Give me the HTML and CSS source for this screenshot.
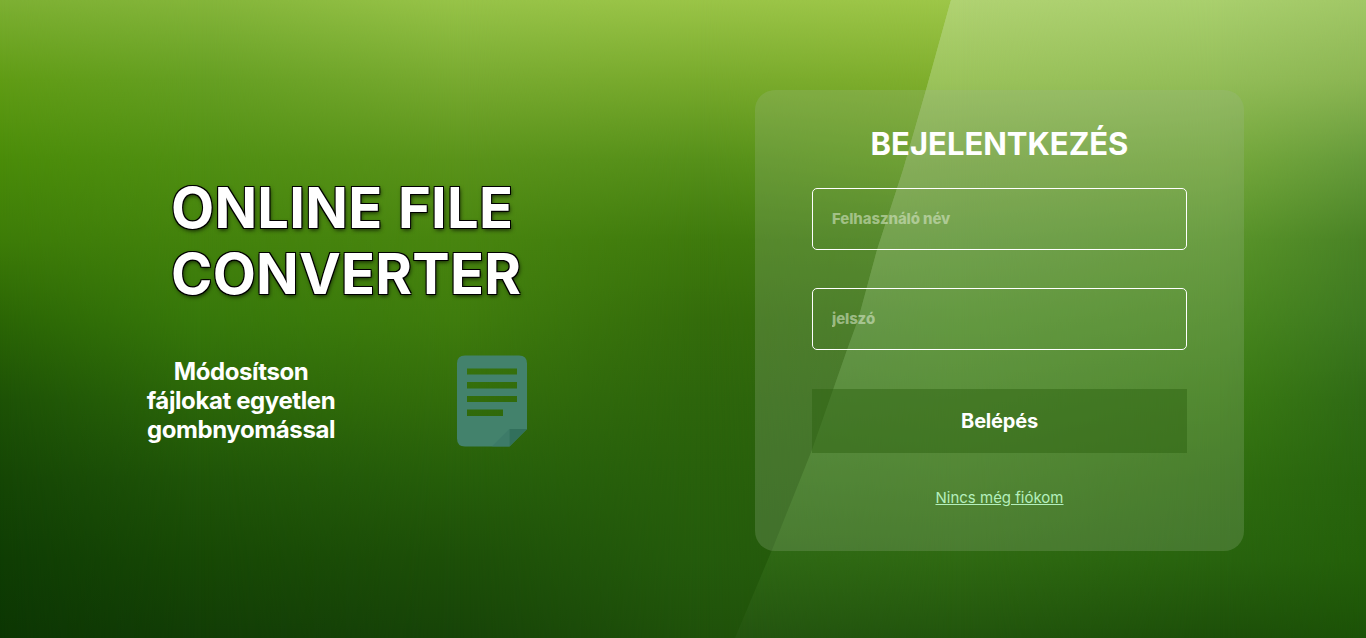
FILE: index.html
```html
<!DOCTYPE html>
<html lang="hu">
<head>
<meta charset="utf-8">
<title>Online File Converter</title>
<link rel="stylesheet" href="styles.css">
</head>
<body>
<div class="backdrop" aria-hidden="true">
  <div class="tone l1"></div><div class="tone l2"></div><div class="tone l3"></div><div class="tone l4"></div><div class="tone l5"></div>
  <div class="beam"><div class="tone r1"></div><div class="tone r2"></div><div class="tone r3"></div><div class="tone r4"></div></div>
</div>
<main class="page">
  <section class="intro">
    <h1 class="title">ONLINE FILE<br>CONVERTER</h1>
    <div class="pitch">
      <p class="slogan">Módosítson<br>fájlokat egyetlen<br>gombnyomással</p>
      <svg class="doc" viewBox="0 0 70 92" width="70" height="92">
        <path fill="#43826c" fill-rule="evenodd" d="M8 .5H62Q70 .5 70 8.500V74L52.500 91.500H8Q0 91.500 0 83.500V8.500Q0 .5 8 .5ZM10 13.500V19.500H60V13.500ZM10 27V33.500H60V27ZM10 41V47H60V41ZM10 54.500V61H46V54.500Z"/>
        <path fill="#3a7867" opacity=".7" d="M52.500 74V91.500H35Z"/>
        <path fill="#32705c" d="M52.500 74H70L52.500 91.500Z"/>
      </svg>
    </div>
  </section>
  <form class="panel">
    <h2 class="heading">BEJELENTKEZÉS</h2>
    <input class="field" type="text" placeholder="Felhasználó név">
    <input class="field" type="password" placeholder="jelszó">
    <button class="submit" type="button">Belépés</button>
    <a class="register" href="#">Nincs még fiókom</a>
  </form>
</main>
</body>
</html>
```
FILE: styles.css
```css
* { box-sizing: border-box; }
html, body { margin: 0; height: 100%; overflow: hidden; }
body { font-family: Inter, "Liberation Sans", sans-serif; color: #fff; background: #2d610d; }

/* Vertical tones blended horizontally into a smooth mesh. */
.backdrop { position: absolute; inset: 0; z-index: -1; overflow: hidden; }
.tone { position: absolute; inset: 0; }
.l1 { background: linear-gradient(#7db033 0, #609c15 80px, #4a8c09 160px, #3d7c08 240px, #2b6605 320px, #1d5206 400px, #154605 480px, #0f3d04 560px, #0c3603 638px); }
.l2 { background: linear-gradient(#84b53a 0, #659f22 80px, #508f12 160px, #43820c 240px, #37780a 320px, #2b6609 400px, #1f5408 480px, #174805 560px, #123d06 638px); mask-image: linear-gradient(90deg, transparent 0, #000 200px); }
.l3 { background: linear-gradient(#97c348 0, #78aa30 80px, #5a931a 160px, #48850f 240px, #3f7c0d 320px, #336d0b 400px, #265e0a 480px, #1d4f08 560px, #174408 638px); mask-image: linear-gradient(90deg, transparent 200px, #000 460px); }
.l4 { background: linear-gradient(#9ac447 0, #78aa2c 80px, #56901a 160px, #3f7a0d 240px, #346c0b 320px, #2d650c 400px, #28600c 480px, #245b0c 560px, #1f510a 638px); mask-image: linear-gradient(90deg, transparent 460px, #000 700px); }
.l5 { background: linear-gradient(#9dc648 0, #7fae2d 80px, #619a18 160px, #427d10 240px, #346e0b 320px, #2d650c 400px, #295f0c 480px, #24570c 638px); mask-image: linear-gradient(90deg, transparent 700px, #000 940px); }
.beam { position: absolute; inset: 0; clip-path: polygon(951px 0, 926px 90px, 903px 170px, 877px 250px, 858px 320px, 847px 350px, 812px 450px, 772px 550px, 735px 638px, 1366px 638px, 1366px 0); }
.r1 { background: linear-gradient(#b0d272 0, #9bc25a 80px, #86ae50 160px, #6b9c3d 240px, #558838 320px, #467f28 400px, #38741b 480px, #2e6714 560px, #245510 638px); }
.r2 { background: linear-gradient(#b0d272 0, #9bc35b 80px, #7daa45 160px, #649a38 240px, #529028 320px, #458320 400px, #3b7718 480px, #2f6912 560px, #22550d 638px); mask-image: linear-gradient(90deg, transparent 740px, #000 960px); }
.r3 { background: linear-gradient(#a9cf6d 0, #93bd58 80px, #76a93c 160px, #5a952a 240px, #49881e 320px, #3a7b13 400px, #2f6d0f 480px, #28630e 560px, #1d4f09 638px); mask-image: linear-gradient(90deg, transparent 960px, #000 1220px); }
.r4 { background: linear-gradient(#a1c766 0, #8bb552 80px, #659a3a 160px, #498225 240px, #3d7820 320px, #2f6a15 400px, #28640e 480px, #24600a 560px, #1c5207 638px); mask-image: linear-gradient(90deg, transparent 1220px, #000 1366px); }

.page { display: flex; justify-content: space-between; padding: 90px 122px 0 141px; }
.intro { width: 400px; padding-top: 85px; }
.title {
  margin: 0 0 0 30px; font-size: 56px; line-height: 66px; font-weight: 700; white-space: nowrap;
  letter-spacing: .25px; word-spacing: 2px;
  text-shadow: -1px -1px 0 #000, 1px -1px 0 #000, -1px 1px 0 #000, 1px 1px 0 #000, 1px 2px 4px rgba(0, 0, 0, .75);
}
.pitch { display: flex; align-items: flex-start; gap: 116px; margin-top: 48px; }
.slogan { margin: 2px 0 0; width: 200px; text-align: center; font-size: 24px; line-height: 29px; font-weight: 700; letter-spacing: -.4px; white-space: nowrap; }
.doc { flex: none; display: block; }

.panel {
  width: 489px; height: 461px; padding: 34px 57px 0; border-radius: 20px;
  background: rgba(160, 183, 148, .24);
  display: flex; flex-direction: column; align-items: center;
}
.heading { margin: 0 0 24px; font-size: 31px; line-height: 40px; font-weight: 700; }
.field {
  width: 100%; height: 62px; margin: 0 0 38px; padding: 0 19px 1px; border: 1px solid #fff; border-radius: 5px;
  background: transparent; color: #fff; font: 700 15px/20px Inter, sans-serif; outline: none;
}
.field::placeholder { color: rgba(218, 232, 203, .56); opacity: 1; font-weight: 800; letter-spacing: -.12px; }
.submit {
  width: 100%; height: 64px; flex: none; margin: 1px 0 35px; padding: 0; border: 0; color: #fff;
  background: rgba(42, 96, 14, .45); font: 700 20px/24px Inter, sans-serif; letter-spacing: -.2px;
}
.register { color: #b4efbd; font-size: 15px; line-height: 20px; text-decoration: underline; }
```
